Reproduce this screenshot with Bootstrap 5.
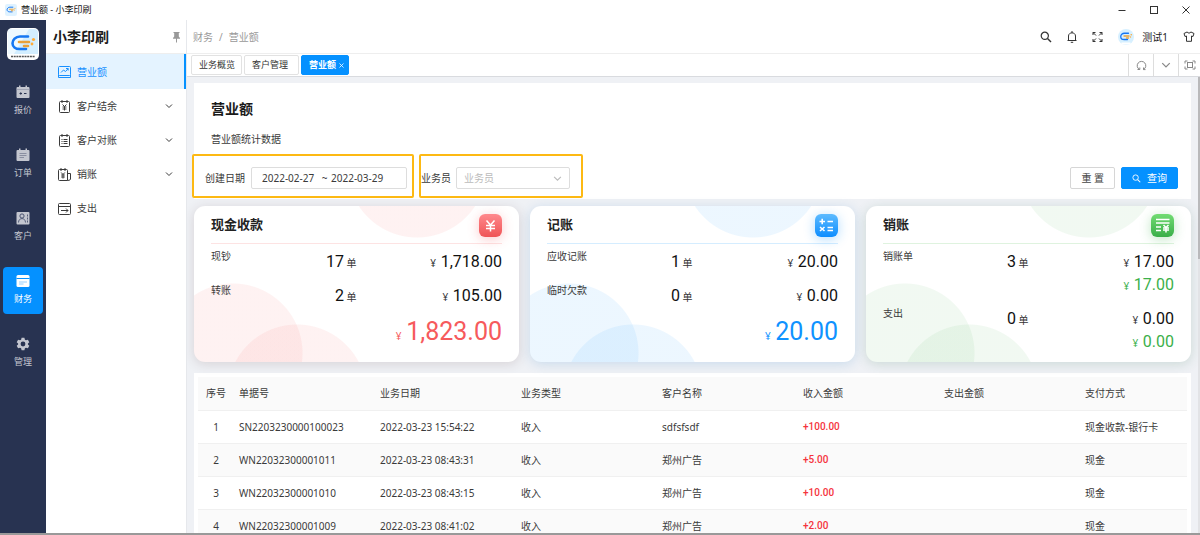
<!DOCTYPE html>
<html lang="zh-CN">
<head>
<meta charset="utf-8">
<meta name="viewport" content="width=device-width, initial-scale=1">
<title>营业额 - 小李印刷</title>
<link rel="stylesheet" href="https://cdn.jsdelivr.net/npm/bootstrap@5.3.0/dist/css/bootstrap.min.css">
<style>
:root{--blue:#0591ff;--ink:#3a3a3a}
body{font:10px/16px "Noto Sans","Noto Sans CJK SC",sans-serif;color:var(--ink);background:#fff}
svg{display:block;flex:none;fill:none;stroke:currentColor;stroke-width:1}
a{color:inherit;text-decoration:none}
.plain-btn{border:0;background:none;padding:0;color:#333}
.window-bar{height:20px;font-size:9px;color:#111;padding-left:5px}
.window-bar .win-actions{gap:20px;padding-right:8px}
.app-rail{width:46px;background:#283351;color:#c3c6cf;font-size:9px;padding:8px 3px 0}
.app-rail .logo-tile{margin-bottom:18px}
.rail-list{gap:16px}
.rail-link{height:47px;width:40px;padding-top:7px;gap:4px;border-radius:4px;line-height:14px}
.rail-link.current{background:var(--blue);color:#fff}
.side-menu{width:141px;border-right:1px solid #e6e8ec}
.side-head{height:34px;border-bottom:1px solid #eee;padding:0 5px 0 7px}
.side-head h1{font-size:14px;line-height:20px;font-weight:700;color:#1c1c1c}
.menu-link{height:34px;padding:0 13px 0 12px;gap:6px}
.menu-link.current{height:35px;background:#e4f3ff;color:#1890ff;border-right:2px solid var(--blue)}
.top-head{height:34px;border-bottom:1px solid #eee;padding:0 5px 0 6px}
.crumbs{--bs-breadcrumb-divider-color:#999;--bs-breadcrumb-item-padding-x:6px;color:#999}
.crumbs .breadcrumb-item.active{color:#999}
.head-tools{color:#222}
.head-tools .tool-gap{margin-right:15px}
.tab-strip{height:23px;border-bottom:1px solid #d9dbdf;padding-left:4px}
.page-tab{height:20px;font-size:9px;line-height:18px;border:1px solid #e2e2e2;border-radius:2px;padding:0 6px 0 7px;color:#333}
.page-tab.roomy{padding-right:10px}
.page-tab.current{background:var(--blue);border-color:var(--blue);color:#fff;font-weight:700;gap:3px;padding-right:4px}
.tab-tools .plain-btn{width:25px;border-left:1px solid #ddd;color:#888;display:flex;align-items:center;justify-content:center}
.tab-tools .plain-btn:last-child{width:22px}
.work-area{background:#eff1f5;padding:6px 9px 0 7px}
.scroll-thumb{position:absolute;right:0;top:0;bottom:0;width:2px;background:linear-gradient(#b9b9bb 40%,#e2e3e6 40%)}
.bottom-edge{height:2px;background:#999}
.filter-panel{background:#fff;padding:15px 0 1px}
.filter-panel h2{font-size:14px;line-height:22px;font-weight:700;color:#1a1a1a;margin:0 0 11px 17px}
.filter-panel p{line-height:16px;margin:0 0 7px 17px}
.filter-row{margin:0 13px 0 -2px;gap:5px}
.marked-field{border:2px solid #fdb913;border-radius:2px;padding:11px 11px 7px 0;height:44px}
.marked-field.spaced{padding:11px 5px 7px 11px;gap:6px}
.marked-field.snug{gap:5px}
.field-box{height:22px;border:1px solid #ddd;border-radius:2px;background:#fff}
.date-box{width:156px;padding:0 8px 0 10px}
.date-box input{border:0;padding:0;width:56px;background:none;color:var(--ink);line-height:20px}
.date-box span{width:13px}
.pick-box{position:relative;width:114px}
.pick-box select{appearance:none;border:0;background:none;width:100%;height:20px;padding:0 7px;color:#bbb}
.pick-box svg{position:absolute;right:7px;top:6px;color:#bbb;pointer-events:none}
.action-btn{--bs-btn-font-size:10px;--bs-btn-line-height:16px;--bs-btn-padding-y:2px;--bs-btn-padding-x:10px;--bs-btn-border-radius:2px;height:22px}
.reset-btn{--bs-btn-color:#444;--bs-btn-border-color:#d6d6d6;--bs-btn-bg:#fff}
.query-btn{--bs-btn-bg:var(--blue);--bs-btn-border-color:var(--blue);gap:6px}
.filter-actions{padding-top:13px;gap:6px}
.cards-grid{display:grid;grid-template-columns:repeat(3,1fr);gap:11px;margin:7px 0 11px}
.sum-card{border-radius:11px;padding:8px 17px 9px;background:
 radial-gradient(circle 70px at 223px -38px,var(--disc) 69px,transparent 70px),
 radial-gradient(circle 70px at 39px 147px,var(--disc) 69px,transparent 70px),
 radial-gradient(circle 70px at 103px 188px,var(--disc) 69px,transparent 70px),#fff;
 box-shadow:0 2px 12px var(--fade)}
.tone-red{--disc:rgba(245,70,70,.07);--line:#fde3e3;--tone:#f65a5c;--fade:rgba(90,50,55,.16)}
.tone-blue{--disc:rgba(20,150,255,.08);--line:#d5edff;--tone:#0f92ff;--fade:rgba(50,130,200,.2)}
.tone-green{--disc:rgba(60,170,70,.07);--line:#dff3df;--tone:#3bb04a;--fade:rgba(50,110,80,.19)}
.sum-head{height:30px;border-bottom:1px solid var(--line);margin-bottom:6px}
.sum-head h3{font-size:13px;line-height:20px;font-weight:700;color:#222;margin:0}
.icon-tile{width:23px;height:23px;border-radius:6px;color:#fff;box-shadow:0 2px 12px color-mix(in srgb,var(--tone) 32%,transparent)}
.tone-red .icon-tile{background:linear-gradient(#ff898d,#ef5456)}
.tone-blue .icon-tile{background:linear-gradient(#5dbbff,#0d8dff)}
.tone-green .icon-tile{background:linear-gradient(#72dc73,#3aae49)}
.sum-line{display:grid;grid-template-columns:1fr 1fr;margin-bottom:11px}
.sum-line:last-child{margin-bottom:0}
.sum-label{line-height:13px}
.figure-text{height:23px;font-size:10px;line-height:23px;text-align:right;color:#333}
.figure-text b{font:400 16px/23px Roboto,sans-serif;color:#111;margin-left:2px}
.figure-text.toned,.figure-text.toned b{color:var(--tone)}
.total-text{height:28px;font-size:10px;line-height:28px;text-align:right;color:var(--tone)}
.total-text b{font:400 25px/28px Roboto,sans-serif;margin-left:2px}
.list-panel{background:#fff;padding:4px}
.ledger{--bs-table-color:var(--ink);--bs-table-bg:#fff;table-layout:fixed;margin:0}
.ledger th,.ledger td{height:33px;padding:0 5px;font-weight:400;vertical-align:middle;border-bottom:1px solid #f0f0f0;white-space:nowrap}
.ledger thead th,.ledger tbody tr:nth-child(even) td{background:#fafafa}
.ledger .income{font:500 10px/16px Roboto,sans-serif;color:#f5333c}
.ledger .col-no{width:36px}
.ledger .col-std{width:141px}
</style>
</head>
<body>
<svg width="0" height="0" class="position-absolute" aria-hidden="true">
 <defs>
  <symbol id="brand" viewBox="0 0 32 32">
   <path d="M21 8.500H13C8.500 8.500 5.500 12 5.500 15.300S8.500 21 12.500 21H19" stroke="#1677f2" stroke-width="2.600" fill="none" stroke-linecap="round"/>
   <path d="M12 14H22M17 18H21" stroke="#e9a13a" stroke-width="2.600" fill="none" stroke-linecap="round"/>
   <circle cx="26.500" cy="11.500" r="1.600" fill="#ffab39" stroke="none"/><circle cx="25" cy="16" r="1.400" fill="#ffab39" stroke="none"/>
  </symbol>
  <symbol id="down" viewBox="0 0 8 8"><path d="M1 2.500 4 5.500 7 2.500"/></symbol>
  <symbol id="lens" viewBox="0 0 12 12"><circle cx="4.800" cy="4.800" r="3.600" stroke-width="1.200"/><path d="M7.500 7.500 11 11" stroke-width="1.400"/></symbol>
 </defs>
</svg>

<div class="vh-100 d-flex flex-column overflow-hidden">
 <header class="window-bar d-flex align-items-center flex-shrink-0">
  <svg width="12" height="12" viewBox="0 0 32 32" class="me-1"><rect width="32" height="32" rx="6" fill="#dff2ff" stroke="none"/><use href="#brand"/></svg>
  <span>营业额 - 小李印刷</span>
  <div class="win-actions d-flex ms-auto">
   <button class="plain-btn" aria-label="最小化"><svg width="12" height="12"><path d="M2.500 6.500H9.500"/></svg></button>
   <button class="plain-btn" aria-label="最大化"><svg width="12" height="12"><rect x="2.500" y="2.500" width="7" height="7"/></svg></button>
   <button class="plain-btn" aria-label="关闭"><svg width="12" height="12"><path d="M2.500 2.500 9.500 9.500M9.500 2.500 2.500 9.500"/></svg></button>
  </div>
 </header>

 <div class="d-flex flex-grow-1 overflow-hidden">
  <nav class="app-rail d-flex flex-column align-items-center flex-shrink-0" aria-label="主导航">
   <svg class="logo-tile" width="32" height="32" viewBox="0 0 32 32"><rect width="32" height="32" rx="5" fill="#fff" stroke="none"/><path d="M1 5a4 4 0 0 1 4-4h22a4 4 0 0 1 4 4v21H1z" fill="#d3eeff" stroke="none"/><path d="M1 5a4 4 0 0 1 4-4h17L7 26H1z" fill="#eef9ff" stroke="none"/><use href="#brand"/><path d="M4 28.500H28" stroke="#555" stroke-width="1.500" stroke-dasharray="2 .7"/></svg>
   <div class="rail-list d-flex flex-column">
    <a href="#" class="rail-link d-flex flex-column align-items-center"><svg width="14" height="14"><path d="M.5 3Q.5 2 1.500 2H3V.5H4.500V2H9.500V.5H11V2H12.500Q13.500 2 13.500 3V12Q13.500 13 12.500 13H1.500Q.5 13 .5 12Z" fill="currentColor" stroke="none"/><path d="M3.500 8.500H6M4.750 7.300V9.700M8 8.500H10.500" stroke="#283351"/><path d="M.5 4.500H13.500" stroke="#9297a8" stroke-width=".7"/></svg>报价</a>
    <a href="#" class="rail-link d-flex flex-column align-items-center"><svg width="14" height="14"><path d="M.5 3Q.5 2 1.500 2H3V.5H4.500V2H9.500V.5H11V2H12.500Q13.500 2 13.500 3V12Q13.500 13 12.500 13H1.500Q.5 13 .5 12Z" fill="currentColor" stroke="none"/><path d="M3.500 5.500H10.500M3.500 7.500H10.500M3.500 9.500H8" stroke="#7b8195" stroke-width=".8"/></svg>订单</a>
    <a href="#" class="rail-link d-flex flex-column align-items-center"><svg width="14" height="14"><rect x=".5" y="1" width="13" height="12.500" rx="1" fill="currentColor" stroke="none"/><circle cx="6" cy="5" r="2.100" stroke="#4b5471"/><path d="M2.500 11.500C2.500 6.300 9.500 6.300 9.500 11.500M11.500 3.500V5.500M11.500 6.500V8.500M11.500 9.500V11.500" stroke="#4b5471" stroke-width=".9"/></svg>客户</a>
    <a href="#" class="rail-link current d-flex flex-column align-items-center" aria-current="page"><svg width="14" height="14"><rect x="0.500" y="1" width="13" height="12" rx="1.500" fill="#fff" stroke="none"/><path d="M.5 4.500H13.500" stroke="#0591ff"/><path d="M3 8H11M3 10H7.500" stroke="#8ccbff" stroke-width=".9"/></svg>财务</a>
    <a href="#" class="rail-link d-flex flex-column align-items-center"><svg width="14" height="14" viewBox="0 0 14 14"><path d="M5.600.8H8.400L8.900 2.700 10 3.300 11.900 2.800 13.300 5.200 11.900 6.500V7.500L13.300 8.800 11.900 11.200 10 10.700 8.900 11.300 8.400 13.200H5.600L5.100 11.300 4 10.700 2.100 11.200.7 8.800 2.100 7.500V6.500L.7 5.200 2.100 2.800 4 3.300 5.100 2.700Z" fill="currentColor" stroke="none"/><circle cx="7" cy="7" r="2.400" fill="#283351" stroke="none"/></svg>管理</a>
   </div>
  </nav>

  <aside class="side-menu flex-shrink-0">
   <div class="side-head d-flex align-items-center justify-content-between">
    <h1 class="m-0">小李印刷</h1>
    <button class="plain-btn" aria-label="固定菜单"><svg width="9" height="12" viewBox="0 0 9 12" color="#999"><path d="M1.500 1H7.500V2H6.800V5.500L8 7V7.800H1V7L2.200 5.500V2H1.500Z" fill="currentColor" stroke="none"/><path d="M4.500 7V11.500"/></svg></button>
   </div>
   <nav aria-label="财务菜单">
    <a href="#" class="menu-link current d-flex align-items-center" aria-current="page"><svg width="13" height="13"><rect x=".5" y="1.500" width="12" height="9" rx="1"/><path d="M.5 9.500V12.500H12.500V9.500M3 7.500 5.500 5 7.500 6.500 10 3.800M8 3.500H10.200V5.500"/></svg><span>营业额</span></a>
    <a href="#" class="menu-link d-flex align-items-center"><svg width="13" height="13"><rect x="1.500" y="1.500" width="10" height="11" rx="1"/><path d="M4 0V3M9 0V3M4.500 4.500 6.500 6.500 8.500 4.500M6.500 6.500V10.500M4.500 7H8.500M4.500 9H8.500"/></svg><span>客户结余</span><svg class="ms-auto" width="8" height="8"><use href="#down"/></svg></a>
    <a href="#" class="menu-link d-flex align-items-center"><svg width="13" height="13"><rect x="1.500" y="1.500" width="10" height="11" rx="1"/><path d="M4 0V3M9 0V3M3.500 5.500H4.500M3.500 7.500H4.500M3.500 9.500H4.500M5.500 5.500H9.500M5.500 7.500H9.500M5.500 9.500H9.500"/></svg><span>客户对账</span><svg class="ms-auto" width="8" height="8"><use href="#down"/></svg></a>
    <a href="#" class="menu-link d-flex align-items-center"><svg width="13" height="13"><path d="M9.500 12.500H1.500Q.5 12.500.5 11.500V2.500Q.5 1.500 1.500 1.500H8.500Q9.500 1.500 9.500 2.500ZM9.500 5.500H12.500V11Q12.500 12.500 9.500 12.500M3 0V3M7 0V3M3.200 4.500 5 6.500 6.800 4.500M5 6.500V10.500M3.200 7H6.800M3.200 9H6.800"/></svg><span>销账</span><svg class="ms-auto" width="8" height="8"><use href="#down"/></svg></a>
    <a href="#" class="menu-link d-flex align-items-center"><svg width="13" height="13"><rect x=".5" y="1.500" width="12" height="11" rx="1"/><path d="M.5 4.500H12.500M3 8.500H10M8 6.500 10 8.500 8 10.500"/></svg><span>支出</span></a>
   </nav>
  </aside>

  <main class="flex-grow-1 d-flex flex-column overflow-hidden">
   <div class="top-head d-flex align-items-center flex-shrink-0">
    <nav aria-label="路径"><ol class="breadcrumb crumbs mb-0"><li class="breadcrumb-item"><a href="#">财务</a></li><li class="breadcrumb-item active" aria-current="page">营业额</li></ol></nav>
    <div class="head-tools d-flex align-items-center ms-auto">
     <button class="plain-btn tool-gap" aria-label="搜索"><svg width="12" height="12"><use href="#lens"/></svg></button>
     <button class="plain-btn tool-gap" aria-label="通知"><svg width="10" height="12"><path d="M.5 9.500H9.500M1.500 9.500V5C1.500.8 8.500.8 8.500 5V9.500M5 0V2M3.800 11.300H6.200"/></svg></button>
     <button class="plain-btn tool-gap" aria-label="全屏"><svg width="11" height="12"><path d="M1 4V1.500H3.500M1 1.500 4 4.500M7.500 1.500H10V4M10 1.500 7 4.500M1 8V10.500H3.500M1 10.500 4 7.500M7.500 10.500H10V8M10 10.500 7 7.500"/></svg></button>
     <svg class="me-2" width="16" height="16" viewBox="0 0 32 32"><circle cx="16" cy="16" r="16" fill="#d7f0ff" stroke="none"/><use href="#brand"/><path d="M7 29H25" stroke="#fff" stroke-width="4"/></svg>
     <span class="tool-gap">测试1</span>
     <button class="plain-btn" aria-label="主题"><svg width="12" height="11"><path d="M4 1 1 2.500 2 5.500 3.500 5V10.300H8.500V5L10 5.500 11 2.500 8 1Q6 3.500 4 1Z"/></svg></button>
    </div>
   </div>
   <div class="tab-strip d-flex flex-shrink-0">
    <div class="d-flex align-items-center" style="gap:2px">
     <a class="page-tab" href="#">业务概览</a><a class="page-tab roomy" href="#">客户管理</a><a class="page-tab current d-flex align-items-center" href="#" aria-current="page">营业额<svg width="5" height="5"><path d="M.5.5 4.500 4.500M4.500.5.5 4.500" stroke-width=".8"/></svg></a>
    </div>
    <div class="tab-tools d-flex ms-auto">
     <button class="plain-btn" aria-label="刷新"><svg width="11" height="11"><path d="M3.500 9.500A4.300 4.300 0 1 1 7.500 9.500M1.500 9.500H3.800V7.500M7.500 7.500V9.600H9.500"/></svg></button>
     <button class="plain-btn" aria-label="更多"><svg width="10" height="10" viewBox="0 0 8 8"><use href="#down"/></svg></button>
     <button class="plain-btn" aria-label="展开"><svg width="12" height="10"><rect x="3.500" y="2.500" width="5" height="5"/><path d="M1 3.500V1H3.500M8.500 1H11V3.500M1 6.500V9H3.500M8.500 9H11V6.500"/></svg></button>
    </div>
   </div>

   <div class="position-relative flex-grow-1 overflow-hidden">
    <div class="work-area h-100 overflow-hidden">
     <section class="filter-panel">
      <h2>营业额</h2>
      <p>营业额统计数据</p>
      <form class="filter-row d-flex">
       <div class="marked-field spaced d-flex align-items-center">
        <label for="from">创建日期</label>
        <div class="field-box date-box d-flex align-items-center"><input id="from" type="text" value="2022-02-27"><span class="text-center">~</span><input type="text" aria-label="结束日期" value="2022-03-29"></div>
       </div>
       <div class="marked-field snug d-flex align-items-center">
        <label for="staff">业务员</label>
        <div class="field-box pick-box"><select id="staff"><option>业务员</option></select><svg width="9" height="9" viewBox="0 0 8 8"><use href="#down"/></svg></div>
       </div>
       <div class="filter-actions d-flex ms-auto">
        <button type="reset" class="btn action-btn reset-btn">重 置</button>
        <button type="button" class="btn btn-primary action-btn query-btn d-flex align-items-center"><svg width="9" height="9" viewBox="0 0 12 12"><use href="#lens"/></svg><span>查询</span></button>
       </div>
      </form>
     </section>

     <section class="cards-grid">
      <article class="sum-card tone-red">
       <div class="sum-head d-flex justify-content-between"><h3>现金收款</h3><span class="icon-tile"><svg width="23" height="23"><path d="M7.500 6.500 11.500 11 15.500 6.500M11.500 11V17.500M7 11.500H16M7 14.500H16" stroke-width="1.500"/></svg></span></div>
       <div class="sum-line"><div class="d-flex justify-content-between"><span class="sum-label">现钞</span><span class="figure-text"><b>17</b> 单</span></div><div class="figure-text">¥ <b>1,718.00</b></div></div>
       <div class="sum-line"><div class="d-flex justify-content-between"><span class="sum-label">转账</span><span class="figure-text"><b>2</b> 单</span></div><div class="figure-text">¥ <b>105.00</b></div></div>
       <div class="total-text">¥ <b>1,823.00</b></div>
      </article>
      <article class="sum-card tone-blue">
       <div class="sum-head d-flex justify-content-between"><h3>记账</h3><span class="icon-tile"><svg width="23" height="23"><path d="M4.500 7.500H10M7.200 4.800V10.200M12.500 7.500H18M5 13 9.500 17M9.500 13 5 17M12.500 13.500H18M12.500 16.500H18" stroke-width="1.600"/></svg></span></div>
       <div class="sum-line"><div class="d-flex justify-content-between"><span class="sum-label">应收记账</span><span class="figure-text"><b>1</b> 单</span></div><div class="figure-text">¥ <b>20.00</b></div></div>
       <div class="sum-line"><div class="d-flex justify-content-between"><span class="sum-label">临时欠款</span><span class="figure-text"><b>0</b> 单</span></div><div class="figure-text">¥ <b>0.00</b></div></div>
       <div class="total-text">¥ <b>20.00</b></div>
      </article>
      <article class="sum-card tone-green">
       <div class="sum-head d-flex justify-content-between"><h3>销账</h3><span class="icon-tile"><svg width="23" height="23"><path d="M5 5.500H18.500M5 9H18.500M5 13H10M5 16.500H10M12.500 11 15 13.500 17.500 11M15 13.500V18.500M12 14H18M12 16H18" stroke-width="1.500"/></svg></span></div>
       <div class="sum-line"><div class="d-flex justify-content-between"><span class="sum-label">销账单</span><span class="figure-text"><b>3</b> 单</span></div><div><div class="figure-text">¥ <b>17.00</b></div><div class="figure-text toned">¥ <b>17.00</b></div></div></div>
       <div class="sum-line"><div class="d-flex justify-content-between"><span class="sum-label">支出</span><span class="figure-text"><b>0</b> 单</span></div><div><div class="figure-text">¥ <b>0.00</b></div><div class="figure-text toned">¥ <b>0.00</b></div></div></div>
      </article>
     </section>

     <section class="list-panel">
      <table class="table ledger">
       <colgroup><col class="col-no"><col class="col-std"><col class="col-std"><col class="col-std"><col class="col-std"><col class="col-std"><col class="col-std"><col></colgroup>
       <thead><tr><th class="text-center">序号</th><th>单据号</th><th>业务日期</th><th>业务类型</th><th>客户名称</th><th>收入金额</th><th>支出金额</th><th>支付方式</th></tr></thead>
       <tbody>
        <tr><td class="text-center">1</td><td>SN2203230000100023</td><td>2022-03-23 15:54:22</td><td>收入</td><td>sdfsfsdf</td><td class="income">+100.00</td><td></td><td>现金收款-银行卡</td></tr>
        <tr><td class="text-center">2</td><td>WN22032300001011</td><td>2022-03-23 08:43:31</td><td>收入</td><td>郑州广告</td><td class="income">+5.00</td><td></td><td>现金</td></tr>
        <tr><td class="text-center">3</td><td>WN22032300001010</td><td>2022-03-23 08:43:15</td><td>收入</td><td>郑州广告</td><td class="income">+10.00</td><td></td><td>现金</td></tr>
        <tr><td class="text-center">4</td><td>WN22032300001009</td><td>2022-03-23 08:41:02</td><td>收入</td><td>郑州广告</td><td class="income">+2.00</td><td></td><td>现金</td></tr>
       </tbody>
      </table>
     </section>
    </div>
    <div class="scroll-thumb"></div>
   </div>
  </main>
 </div>
 <div class="bottom-edge flex-shrink-0"></div>
</div>
<script src="https://cdn.jsdelivr.net/npm/bootstrap@5.3.0/dist/js/bootstrap.bundle.min.js"></script>
</body>
</html>
